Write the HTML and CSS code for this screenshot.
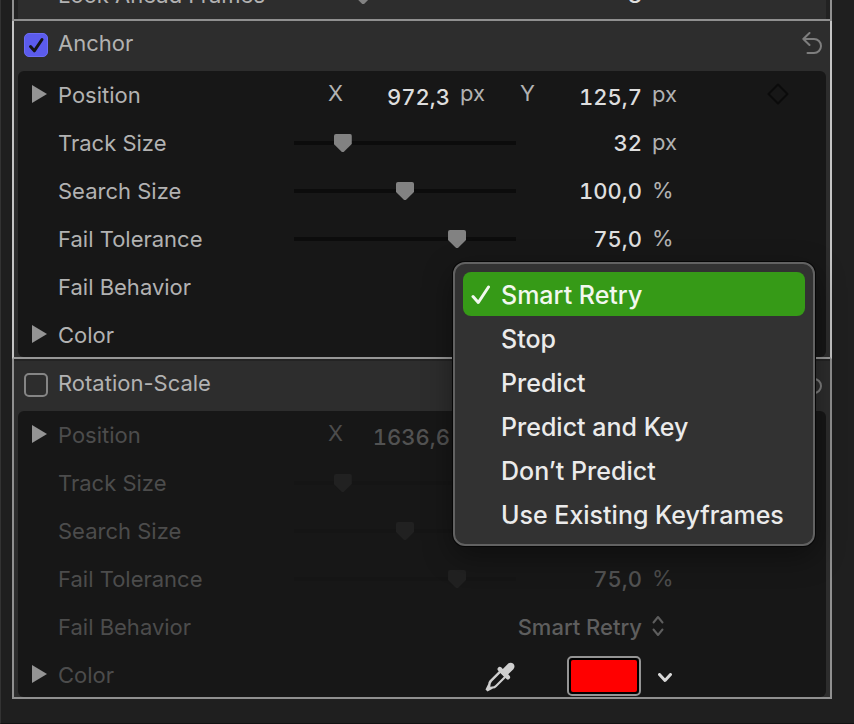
FILE: index.html
```html
<!DOCTYPE html>
<html lang="en">
<head>
    <meta charset="UTF-8">
    <meta name="viewport" content="width=device-width, initial-scale=1.0">
    <title>Tracker Inspector</title>
    <link rel="stylesheet" href="styles.css">
</head>
<body>
    <main class="inspector">
        <section class="group group-top">
            <div class="row">
                <label class="label" for="look-ahead">Look Ahead Frames</label>
                <input class="slider" id="look-ahead" type="range" step="0.5" value="29.5">
                <input class="value" type="text" value="8" aria-label="Look Ahead Frames value">
            </div>
        </section>

        <section class="group group-active">
            <header class="group-header">
                <input class="check" id="anchor" type="checkbox" checked>
                <label class="title" for="anchor">Anchor</label>
                <button class="icon-button reset" type="button" aria-label="Reset Anchor">
                    <svg width="20" height="22" viewBox="0 0 20 22"><path d="M7.5 1 L1.3 7 L7.5 13 M1.3 7 H12 A7 7 0 0 1 12 21 H5.5"/></svg>
                </button>
            </header>
            <div class="group-body">
                <div class="row">
                    <button class="disclosure" type="button" aria-label="Show Position"></button>
                    <span class="label">Position</span>
                    <div class="coord-x">
                        <label for="anchor-x">X</label>
                        <input class="value" id="anchor-x" type="text" value="972,3">
                        <span class="coord-unit">px</span>
                    </div>
                    <div class="coord-y">
                        <label for="anchor-y">Y</label>
                        <input class="value" id="anchor-y" type="text" value="125,7">
                    </div>
                    <div class="unit">px
                        <button class="icon-button keyframe" type="button" aria-label="Add keyframe">
                            <svg width="22" height="22" viewBox="0 0 22 22"><path d="M11 1.5 L20.5 11 L11 20.5 L1.5 11 Z"/></svg>
                        </button>
                    </div>
                </div>
                <div class="row">
                    <label class="label" for="anchor-track">Track Size</label>
                    <input class="slider" id="anchor-track" type="range" step="0.5" value="19.5">
                    <input class="value" type="text" value="32" aria-label="Track Size value">
                    <div class="unit">px</div>
                </div>
                <div class="row">
                    <label class="label" for="anchor-search">Search Size</label>
                    <input class="slider" id="anchor-search" type="range" step="0.5" value="50">
                    <input class="value" type="text" value="100,0" aria-label="Search Size value">
                    <div class="unit">%</div>
                </div>
                <div class="row">
                    <label class="label" for="anchor-fail">Fail Tolerance</label>
                    <input class="slider" id="anchor-fail" type="range" step="0.5" value="75.5">
                    <input class="value" type="text" value="75,0" aria-label="Fail Tolerance value">
                    <div class="unit">%</div>
                </div>
                <div class="row">
                    <span class="label">Fail Behavior</span>
                    <div class="menu" role="menu" aria-label="Fail Behavior">
                        <button class="menu-item selected" type="button" role="menuitemradio" aria-checked="true">
                            <svg class="menu-check" width="20" height="20" viewBox="0 0 20 20"><path d="M2 11.5 L7.3 17.5 L17.5 2"/></svg>
                            Smart Retry
                        </button>
                        <button class="menu-item" type="button" role="menuitemradio">Stop</button>
                        <button class="menu-item" type="button" role="menuitemradio">Predict</button>
                        <button class="menu-item" type="button" role="menuitemradio">Predict and Key</button>
                        <button class="menu-item" type="button" role="menuitemradio">Don’t Predict</button>
                        <button class="menu-item" type="button" role="menuitemradio">Use Existing Keyframes</button>
                    </div>
                </div>
                <div class="row">
                    <button class="disclosure" type="button" aria-label="Show Color"></button>
                    <span class="label">Color</span>
                </div>
            </div>
        </section>

        <section class="group group-off">
            <header class="group-header">
                <input class="check" id="rotation" type="checkbox">
                <label class="title" for="rotation">Rotation-Scale</label>
                <button class="icon-button reset" type="button" aria-label="Reset Rotation-Scale">
                    <svg width="20" height="22" viewBox="0 0 20 22"><path d="M7.5 1 L1.3 7 L7.5 13 M1.3 7 H12 A7 7 0 0 1 12 21 H5.5"/></svg>
                </button>
            </header>
            <div class="group-body">
                <div class="row">
                    <button class="disclosure" type="button" aria-label="Show Position"></button>
                    <span class="label">Position</span>
                    <div class="coord-x">
                        <label for="rotation-x">X</label>
                        <input class="value" id="rotation-x" type="text" value="1636,6" disabled>
                    </div>
                </div>
                <div class="row">
                    <label class="label" for="rotation-track">Track Size</label>
                    <input class="slider" id="rotation-track" type="range" step="0.5" value="19.5" disabled>
                </div>
                <div class="row">
                    <label class="label" for="rotation-search">Search Size</label>
                    <input class="slider" id="rotation-search" type="range" step="0.5" value="50" disabled>
                </div>
                <div class="row">
                    <label class="label" for="rotation-fail">Fail Tolerance</label>
                    <input class="slider" id="rotation-fail" type="range" step="0.5" value="75.5" disabled>
                    <input class="value" type="text" value="75,0" aria-label="Fail Tolerance value" disabled>
                    <div class="unit">%</div>
                </div>
                <div class="row">
                    <label class="label" for="rotation-behavior">Fail Behavior</label>
                    <select class="popup" id="rotation-behavior" disabled>
                        <option>Smart Retry</option>
                    </select>
                    <div class="unit">
                        <svg class="arrows" width="12" height="22" viewBox="0 0 12 22"><path d="M1.5 7.5 L6 2 L10.5 7.5 M1.5 14.5 L6 20 L10.5 14.5"/></svg>
                    </div>
                </div>
                <div class="row">
                    <button class="disclosure" type="button" aria-label="Show Color"></button>
                    <label class="label" for="rotation-color">Color</label>
                    <button class="icon-button eyedropper" type="button" aria-label="Pick color">
                        <svg width="30" height="30" viewBox="0 0 30 30">
                            <path d="M14.5 8.5 L4.5 18.5 Q3.2 20 3.2 22 L0.5 27.5 L2.5 29.5 L8 26.5 Q10 26.5 11.5 25 L21.5 15 Z M15.5 11 L19 14.5 L10.5 23 Q9 24.5 7 24.5 L5.3 24.7 L5.5 23 Q5.5 21 7 19.5 Z" fill-rule="evenodd"/>
                            <path d="M12.7 6.2 Q14.3 4 16.2 5.3 L17.8 6.9 L23 1.8 Q25.7 -0.4 28.4 1.8 Q30.6 4.5 28.4 7.2 L23.2 12.3 L24.8 13.9 Q26 15.7 24 17.3 Q22.8 18.2 21.5 17 L13 8.5 Q12 7.3 12.7 6.2 Z"/>
                        </svg>
                    </button>
                    <input class="swatch" id="rotation-color" type="color" value="#ff0000">
                    <button class="icon-button expand" type="button" aria-label="Show color palette">
                        <svg width="14" height="10" viewBox="0 0 14 10"><path d="M1.5 1.5 L7 7.5 L12.5 1.5"/></svg>
                    </button>
                </div>
            </div>
        </section>
    </main>
</body>
</html>
```
FILE: styles.css
```css
* {
    box-sizing: border-box;
}

body {
    margin: 0;
    min-height: 100vh;
    background-color: #1f1f1f;
    border-left: 1px solid #333;
    border-bottom: 1px solid #121212;
    font-family: Inter, sans-serif;
    font-size: 22px;
    line-height: 28px;
    color: #b2b2b2;
}

button, input, select {
    margin: 0;
    padding: 0;
    border: none;
    background: none;
    color: inherit;
    font: inherit;
}

.inspector {
    margin: 0 22px 0 11px;
}

/* Groups */
.group {
    border: 2px solid #909090;
    border-top: none;
    background-color: #2d2d2d;
}

.group-top {
    display: flex;
    align-items: flex-end;
    height: 21px;
    padding: 0 4px;
    overflow: hidden;
    background-color: #222;
}

.group-top .row {
    background-color: #2d2d2d;
}

.group-active {
    border-color: #c4c4c4;
    border-bottom-color: #979797;
}

.group-off {
    padding-top: 2px;
    background-image: linear-gradient(#232323 2px, transparent 2px);
}

.group-header {
    display: flex;
    align-items: center;
    height: 50px;
    padding: 0 8px 2px 10px;
}

.title {
    flex: 1;
    margin-left: 10px;
    padding-bottom: 4px;
}

.group-body {
    display: flow-root;
    margin: 0 4px;
    border-radius: 6px;
    background-color: #171717;
}

/* Rows */
.row {
    position: relative;
    display: grid;
    grid-template-columns: 40px 1fr 222px 126px 184px;
    align-items: center;
    flex: 1;
    height: 48px;
    flex-shrink: 0;
}

.group-body .row:last-child {
    margin-bottom: -2px;
}

.label {
    grid-column: 2;
    grid-row: 1;
}

.disclosure {
    width: 15px;
    height: 18px;
    margin: 0 0 2px 14px;
    background-color: #949494;
    clip-path: polygon(0 0, 100% 50%, 0 100%);
}

.value {
    grid-column: 4;
    width: 100%;
    min-width: 0;
    text-align: right;
    font-weight: 500;
    font-variant-numeric: tabular-nums;
    color: #dedede;
}

.unit {
    grid-column: 5;
    display: flex;
    align-items: center;
    justify-content: space-between;
    padding: 0 37px 2px 10px;
}

.coord-x {
    grid-column: 3;
    display: flex;
    align-items: flex-start;
    padding-left: 34px;
}

.coord-x .value {
    width: 107px;
}

.coord-unit {
    margin-left: 10px;
}

.coord-y {
    grid-column: 4;
    display: flex;
    align-items: flex-start;
    padding-left: 4px;
}

/* numbers sit a little below their axis letters */
.coord-x .value,
.coord-y .value {
    padding-top: 4px;
}

/* Checkbox */
.check {
    appearance: none;
    width: 24px;
    height: 24px;
    border: 2px solid #858585;
    border-radius: 5px;
}

.check:checked {
    border: 1px solid #6c6cf5;
    background: #5b5bec url("data:image/svg+xml,%3Csvg xmlns='http://www.w3.org/2000/svg' viewBox='0 0 22 22'%3E%3Cpath d='M5.5 12.5 L9.3 16.8 L17 5.5' fill='none' stroke='%23151515' stroke-width='3' stroke-linecap='round' stroke-linejoin='round'/%3E%3C/svg%3E") center / 22px no-repeat;
}

/* Sliders */
.slider {
    grid-column: 3;
    appearance: none;
    width: 100%;
    height: 18px;
    background: linear-gradient(#0c0c0c, #0c0c0c) center / 100% 4px no-repeat;
}

.slider::-webkit-slider-thumb {
    appearance: none;
    width: 18px;
    height: 18px;
    border-radius: 2px;
    background-color: #828282;
    clip-path: polygon(0 0, 100% 0, 100% 55%, 55% 100%, 45% 100%, 0 55%);
}

/* Icon buttons */
.icon-button {
    display: flex;
    justify-content: center;
}

.icon-button svg,
.arrows,
.menu-check {
    fill: none;
    stroke: currentColor;
    stroke-width: 2;
    stroke-linecap: round;
    stroke-linejoin: round;
}

.reset {
    margin-bottom: 4px;
    color: #7e7e7e;
}

.keyframe {
    color: #0b0b0b;
}

.eyedropper {
    grid-column: 3;
    justify-self: end;
    margin: 4px 1px 0 0;
    color: #cfcfcf;
}

.eyedropper svg {
    fill: currentColor;
    stroke: none;
}

.expand {
    grid-column: 5;
    justify-self: start;
    margin: 6px 0 0 16px;
    color: #d8d8d8;
}

.expand svg {
    stroke-width: 3;
}

.swatch {
    grid-column: 4;
    justify-self: end;
    width: 74px;
    height: 40px;
    margin: 2px 1px 0 0;
    padding: 2px;
    border: 2px solid #949494;
    border-radius: 5px;
    background-color: #000;
}

.swatch::-webkit-color-swatch-wrapper {
    padding: 0;
}

.swatch::-webkit-color-swatch {
    border: none;
    border-radius: 2px;
}

/* Popup button */
.popup {
    grid-column: 3 / 5;
    appearance: none;
    width: 100%;
    text-align: right;
    text-align-last: right;
    font-weight: 500;
    opacity: 1;
}

/* Disabled group */
.group-off .group-body .label,
.group-off .group-body .value,
.group-off .coord-x,
.group-off .unit,
.group-off .popup {
    color: #4c4c4c;
}

.group-off .group-body .value {
    color: #525252;
}

.group-off .group-body .popup,
.group-off .arrows {
    color: #5e5e5e;
}

.group-off .slider {
    background-image: linear-gradient(#151515, #151515);
}

.group-off .slider::-webkit-slider-thumb {
    background-color: #212121;
}

/* Open menu */
.menu {
    position: absolute;
    top: -1px;
    right: 11px;
    z-index: 1;
    width: 362px;
    padding: 8px;
    border: 2px solid #626262;
    border-radius: 12px;
    background-color: #323232;
    box-shadow: 0 0 0 1px #060606, 0 10px 30px rgba(0, 0, 0, 0.4);
}

.menu-item {
    position: relative;
    display: block;
    width: 100%;
    height: 44px;
    padding: 2px 0 0 38px;
    border-radius: 8px;
    text-align: left;
    font-size: 25px;
    font-weight: 500;
    color: #ebebeb;
}

.menu-item.selected {
    background-color: #369a17;
    color: #f2f8ef;
}

.menu-check {
    position: absolute;
    top: 13px;
    left: 8px;
    stroke-width: 3;
}
```
